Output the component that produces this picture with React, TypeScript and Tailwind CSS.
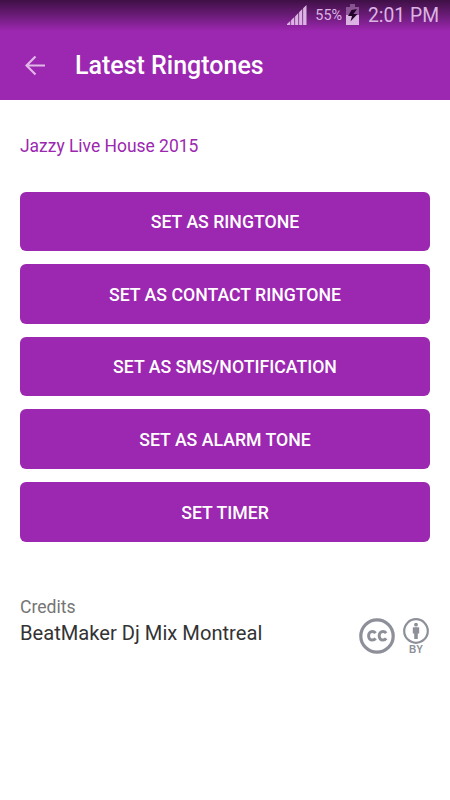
const ACTIONS = [
  'Set as ringtone',
  'Set as contact ringtone',
  'Set as SMS/Notification',
  'Set as alarm tone',
  'Set timer',
]

function StatusBar() {
  return (
    <div className="flex h-[31px] items-center justify-end bg-linear-to-b from-[#3e1045] to-[#9c27b0] pr-[11px] text-[#dcb4e3]">
      <svg
        className="mb-0.5"
        width="20"
        height="20"
        viewBox="0 0 20 20"
        fill="currentColor"
      >
        <path d="M0 20v-1L3.300 16v4zM4.100 20v-4.700L7.300 12v8zM8.100 20v-8.500L11.300 8v12zM12.100 20V7.300L15.300 4v16zM16.100 20V3.200L19.500 0v20z" />
      </svg>
      <span className="ml-2 text-[14.400px] leading-5">55%</span>
      <svg
        className="mb-0.5 ml-1"
        width="13"
        height="21"
        viewBox="0 0 13 21"
        fill="currentColor"
      >
        <path opacity=".4" d="M4 0h5v3h4v9H0V3h4z" />
        <path d="M0 11h13v10H0z" />
        <path d="M5.500 6 2 12h4l-1.500 5.500L11.500 10H7.500L11 5z" fill="#24052a" />
      </svg>
      <span className="ml-[9px] text-[19.300px] leading-6">2:01 PM</span>
    </div>
  )
}

function Header() {
  return (
    <header className="flex h-[69px] items-center bg-[#9c27b0] pl-[25px]">
      <button aria-label="Back" className="text-[#e1b7e8]">
        <svg
          width="20"
          height="20"
          viewBox="0 0 20 20"
          fill="none"
          stroke="currentColor"
          strokeWidth="2.2"
        >
          <path d="M20 9.500H2M10.500.5 1.500 9.500l9 9" />
        </svg>
      </button>
      <h1 className="ml-[30px] text-[25px] font-medium leading-8 text-white">
        Latest Ringtones
      </h1>
    </header>
  )
}

function LicenseBadges() {
  return (
    <div className="flex items-start gap-2 text-[#8d8f99]">
      <svg width="36" height="36" viewBox="0 0 36 36" fill="none">
        <circle
          cx="18"
          cy="18"
          r="16.2"
          stroke="currentColor"
          strokeWidth="3.2"
        />
        <path
          d="M16.600 15.200C15.600 13.900 14.600 13.500 13.300 13.500C11.200 13.500 9.600 15.200 9.600 17.800C9.600 20.400 11.200 22.100 13.300 22.100C14.700 22.100 15.800 21.500 16.600 20.300M27.200 15.200C26.200 13.900 25.200 13.500 23.900 13.500C21.800 13.500 20.200 15.200 20.200 17.800C20.200 20.400 21.800 22.100 23.900 22.100C25.300 22.100 26.400 21.500 27.200 20.300"
          stroke="currentColor"
          strokeWidth="3"
        />
      </svg>
      <div className="flex w-[26px] flex-col items-center">
        <svg width="26" height="26" viewBox="0 0 26 26" fill="currentColor">
          <circle
            cx="13"
            cy="13"
            r="11.8"
            fill="none"
            stroke="currentColor"
            strokeWidth="2.2"
          />
          <circle cx="13" cy="6.700" r="1.900" />
          <path d="M10.500 9.200h5q.7 0 .7.700v5.500h-1.400V21h-3.600v-5.600H9.800V9.900q0-.7.700-.7z" />
        </svg>
        <span className="mt-px font-['Liberation_Sans'] text-[10px] font-bold leading-[9px]">
          BY
        </span>
      </div>
    </div>
  )
}

export default function App() {
  return (
    <div className="h-screen w-full overflow-hidden bg-white font-[Roboto,sans-serif]">
      <StatusBar />
      <Header />
      <main className="px-5 pt-[34px]">
        <h2 className="text-[17.450px] leading-6 text-[#9c27b0]">
          Jazzy Live House 2015
        </h2>
        <div className="mt-[33.700px] flex flex-col gap-[13px]">
          {ACTIONS.map((action) => (
            <button
              key={action}
              className="h-[59.6px] w-full rounded-md bg-[#9c27b0] pt-[2px] text-[17.700px] font-medium uppercase text-white"
            >
              {action}
            </button>
          ))}
        </div>
        <div className="mt-[53px] flex justify-between">
          <div>
            <p className="text-[17.600px] leading-6 text-[#757575]">Credits</p>
            <p className="text-[20.150px] leading-7 text-[#333333]">
              BeatMaker Dj Mix Montreal
            </p>
          </div>
          <div className="pr-px pt-[23px]">
            <LicenseBadges />
          </div>
        </div>
      </main>
    </div>
  )
}
